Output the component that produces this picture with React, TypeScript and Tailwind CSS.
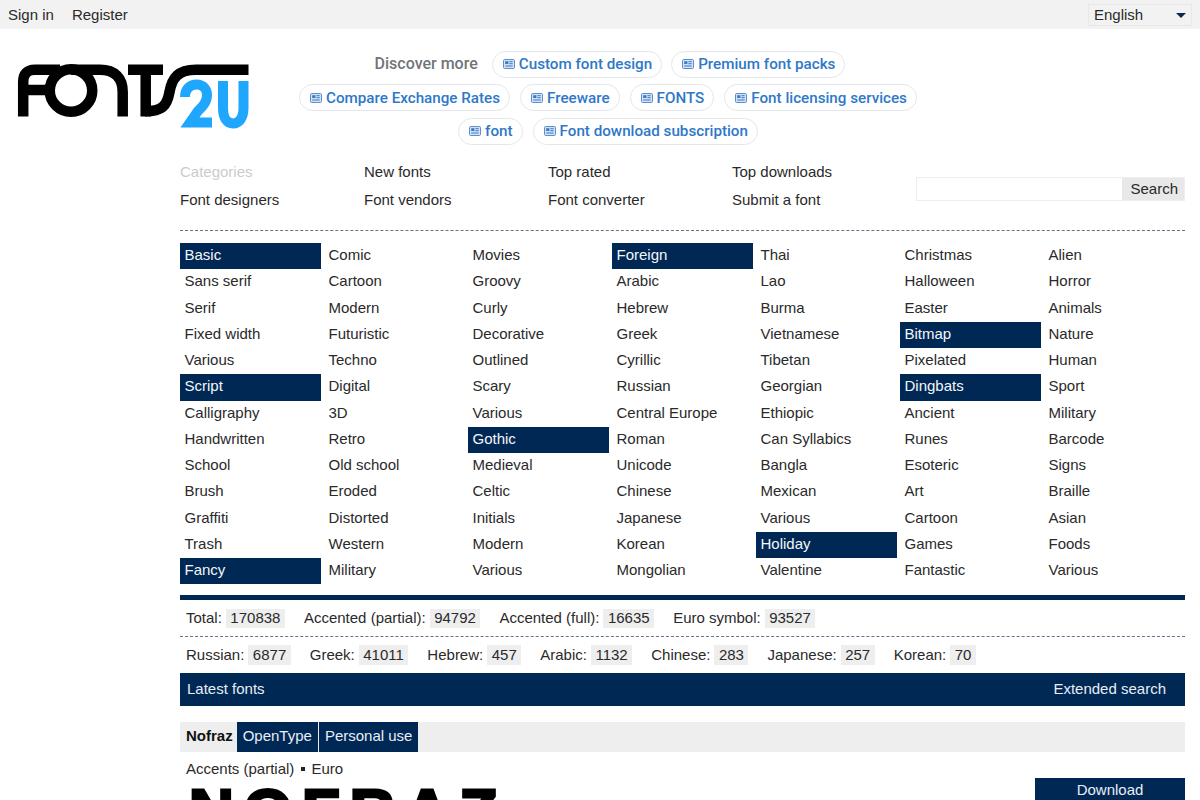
import React from "react";

const columns: { label: string; on?: boolean }[][] = [
  ["Basic*", "Sans serif", "Serif", "Fixed width", "Various", "Script*", "Calligraphy", "Handwritten", "School", "Brush", "Graffiti", "Trash", "Fancy*"],
  ["Comic", "Cartoon", "Modern", "Futuristic", "Techno", "Digital", "3D", "Retro", "Old school", "Eroded", "Distorted", "Western", "Military"],
  ["Movies", "Groovy", "Curly", "Decorative", "Outlined", "Scary", "Various", "Gothic*", "Medieval", "Celtic", "Initials", "Modern", "Various"],
  ["Foreign*", "Arabic", "Hebrew", "Greek", "Cyrillic", "Russian", "Central Europe", "Roman", "Unicode", "Chinese", "Japanese", "Korean", "Mongolian"],
  ["Thai", "Lao", "Burma", "Vietnamese", "Tibetan", "Georgian", "Ethiopic", "Can Syllabics", "Bangla", "Mexican", "Various", "Holiday*", "Valentine"],
  ["Christmas", "Halloween", "Easter", "Bitmap*", "Pixelated", "Dingbats*", "Ancient", "Runes", "Esoteric", "Art", "Cartoon", "Games", "Fantastic"],
  ["Alien", "Horror", "Animals", "Nature", "Human", "Sport", "Military", "Barcode", "Signs", "Braille", "Asian", "Foods", "Various"],
].map((c) => c.map((s) => ({ label: s.replace("*", ""), on: s.endsWith("*") })));

function AdIcon() {
  return (
    <svg width="12" height="10" viewBox="0 0 12 10" className="shrink-0">
      <rect x="0.5" y="0.5" width="11" height="9" rx="1.2" fill="#d3e3f6" stroke="#5a90d2" />
      <rect x="2.2" y="2.2" width="3.2" height="2.8" fill="#3b78c4" />
      <path d="M6.4 2.7h3.3M6.4 4.7h3.3M2.2 7h7.5" stroke="#3b78c4" strokeWidth="1" />
    </svg>
  );
}

function Chip({ children }: { children: string }) {
  return (
    <a className="flex h-[27px] items-center gap-[4px] rounded-full border border-[#e3e6ea] pl-[10px] pr-[9px] text-[15.2px] font-medium text-[#2f78c8]">
      <AdIcon />
      <span>{children}</span>
    </a>
  );
}

function Logo() {
  return (
    <svg width="240" height="72" viewBox="0 0 240 72" className="shrink-0" fill="none">
      <g transform="translate(-14 -60)">
        <g stroke="#000" strokeWidth="10.5">
          <path d="M23.2 116.500V82C23.200 74 27 69.700 35 69.700H60M23 90H52" />
          <circle cx="71" cy="90.500" r="21.250" />
          <path d="M71 69.700H100C115 69.700 122.700 78 122.700 92V116.500" />
          <path d="M128 69.700H163M145.700 69.700V116.500" />
          <path d="M145 111.300C162 111.300 167 106 169.500 92C172 78 178 69.700 196 69.700H248.500" />
        </g>
        <g stroke="#1ea7fd" strokeWidth="10">
          <path d="M185 97C185 89 190 84.500 196.500 84.500C203 84.500 207 89 207 95C207 102 203 106 198 111L190 122.500H212" />
          <path d="M223 81V108C223 118 227 123.500 233 123.500C239 123.500 243.500 118 243.500 108V81" />
        </g>
      </g>
    </svg>
  );
}

function Stat({ label, value, h }: { label: string; value: string; h: string }) {
  return (
    <span className="flex items-center gap-[4px]">
      <span>{label}</span>
      <span className={"flex items-center bg-[#eeeeee] px-[4.5px] " + h}>{value}</span>
    </span>
  );
}

export default function App() {
  const nav = [
    ["Categories", "New fonts", "Top rated", "Top downloads"],
    ["Font designers", "Font vendors", "Font converter", "Submit a font"],
  ];
  return (
    <div className="h-[800px] overflow-hidden bg-white text-[15px] leading-[20px] text-[#2a2a2a] [font-family:'Liberation_Sans',Arial,sans-serif]">
      <header className="flex h-[29px] items-center justify-between bg-[#f2f2f2] pl-[8px] pr-[8px]">
        <div className="flex gap-[18px]">
          <a>Sign in</a>
          <a>Register</a>
        </div>
        <div className="mt-[1px] flex h-[22px] w-[104px] items-center justify-between border border-[#e8e8e8] pl-[5px] pr-[5px]">
          <span>English</span>
          <span className="h-0 w-0 border-x-[5px] border-t-[5px] border-x-transparent border-t-[#0b2a50]" />
        </div>
      </header>

      <div className="flex">
        <div className="w-[180px] shrink-0 pl-[14px] pt-[31px]">
          <div className="w-[240px]">
            <Logo />
          </div>
        </div>
        <main className="w-[1005px] shrink-0">
          <div className="flex h-[133px] flex-col items-center gap-[6.5px] pr-[149px] pt-[21.5px] [font-family:Roboto,sans-serif]">
            <div className="flex items-center gap-[9px] pl-[4px]">
              <span className="mr-[5px] text-[16px] font-medium text-[#70757a]">Discover more</span>
              <Chip>Custom font design</Chip>
              <Chip>Premium font packs</Chip>
            </div>
            <div className="flex gap-[10px]">
              <Chip>Compare Exchange Rates</Chip>
              <Chip>Freeware</Chip>
              <Chip>FONTS</Chip>
              <Chip>Font licensing services</Chip>
            </div>
            <div className="flex gap-[10px]">
              <Chip>font</Chip>
              <Chip>Font download subscription</Chip>
            </div>
          </div>

          <div className="flex h-[69px] items-start justify-between border-b border-dashed border-[#64748b]">
            <div className="grid grid-cols-[184px_184px_184px_184px] gap-y-[8px]">
              {nav.flat().map((t, i) => (
                <a key={t} className={i === 0 ? "text-[#cccccc]" : ""}>
                  {t}
                </a>
              ))}
            </div>
            <div className="mt-[15px] flex h-[24px] w-[269px] border border-[#eeeeee]">
              <div className="flex-1 bg-white" />
              <div className="flex w-[62px] items-center justify-end bg-[#e8e8e8] pr-[6px]">Search</div>
            </div>
          </div>

          <div className="mt-[12px] grid grid-cols-[144px_144px_144px_144px_144px_144px_144px]">
            {columns.map((col, i) => (
              <div key={i}>
                {col.map((it, j) => (
                  <a
                    key={j}
                    className={
                      "flex h-[26.25px] w-[141px] items-center pb-[2px] pl-[4.5px] " +
                      (it.on ? "bg-[#002855] text-[#f4f6f9]" : "")
                    }
                  >
                    {it.label}
                  </a>
                ))}
              </div>
            ))}
          </div>

          <div className="mt-[11px] h-[5px] bg-[#002855]" />
          <div className="flex h-[37px] items-center gap-[19px] border-b border-dashed border-[#64748b] pl-[6px]">
            <Stat h="h-[19px]" label="Total:" value="170838" />
            <Stat h="h-[19px]" label="Accented (partial):" value="94792" />
            <Stat h="h-[19px]" label="Accented (full):" value="16635" />
            <Stat h="h-[19px]" label="Euro symbol:" value="93527" />
          </div>
          <div className="flex h-[36px] items-center gap-[19px] pl-[6px]">
            <Stat h="h-[20px]" label="Russian:" value="6877" />
            <Stat h="h-[20px]" label="Greek:" value="41011" />
            <Stat h="h-[20px]" label="Hebrew:" value="457" />
            <Stat h="h-[20px]" label="Arabic:" value="1132" />
            <Stat h="h-[20px]" label="Chinese:" value="283" />
            <Stat h="h-[20px]" label="Japanese:" value="257" />
            <Stat h="h-[20px]" label="Korean:" value="70" />
          </div>
          <div className="flex h-[33px] items-center justify-between bg-[#002855] pl-[7px] pr-[19px] pb-[1px] text-[#e8eef5]">
            <span>Latest fonts</span>
            <span>Extended search</span>
          </div>

          <div className="mt-[16px] flex h-[30px] items-stretch bg-[#eeeeee]">
            <b className="flex items-center pb-[2px] pl-[6px] pr-[4px] text-[#111]">Nofraz</b>
            <span className="flex items-center bg-[#002855] px-[6px] pb-[2px] text-[#e8eef5]">OpenType</span>
            <span className="ml-[1px] flex items-center bg-[#002855] px-[6px] pb-[2px] text-[#e8eef5]">Personal use</span>
          </div>
          <div className="flex justify-between">
            <div className="pl-[6px]">
              <div className="mt-[7px] flex items-center gap-[6.5px]">
                <span>Accents (partial)</span>
                <span className="h-[4px] w-[4px] bg-[#222]" />
                <span>Euro</span>
              </div>
              <div className="ml-[3px] mt-[2px] whitespace-nowrap text-[62px] font-bold leading-[60px] tracking-[10px] text-black [-webkit-text-stroke:3px_black]">NOFRAZ</div>
            </div>
            <a className="mt-[26px] flex h-[24px] w-[150px] justify-center bg-[#002855] pt-[2px] text-[#e8eef5]">Download</a>
          </div>
        </main>
      </div>
    </div>
  );
}
